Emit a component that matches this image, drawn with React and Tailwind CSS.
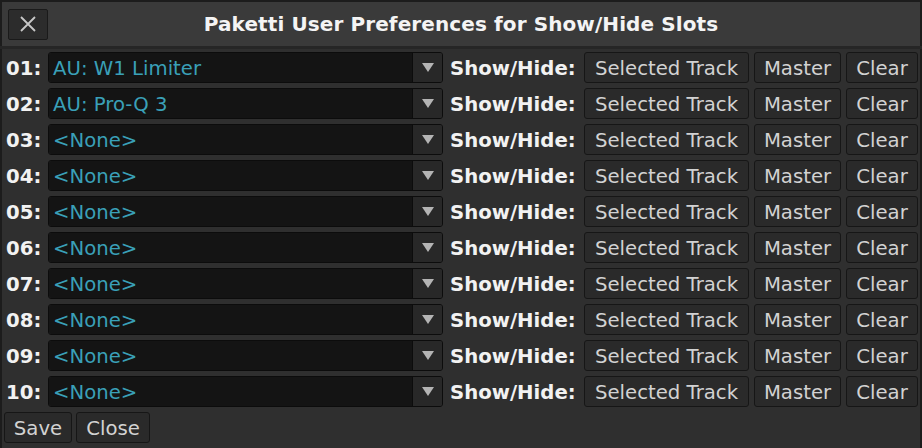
import React from "react";

const slots = [
  "AU: W1 Limiter",
  "AU: Pro-Q 3",
  "<None>",
  "<None>",
  "<None>",
  "<None>",
  "<None>",
  "<None>",
  "<None>",
  "<None>",
];

function Btn({ children, className = "" }) {
  return (
    <button
      className={`flex h-[31px] items-center justify-center rounded-[3px] border border-[#161616] bg-[#2a2a2a] pt-[2px] text-[19.7px] text-[#d2d2d2] ${className}`}
    >
      {children}
    </button>
  );
}

function SlotRow({ index, value }) {
  const num = String(index + 1).padStart(2, "0");
  return (
    <div className="flex h-[31px] items-center pl-[4px]">
      <span className="w-[42px] pt-[2px] text-[19.7px] font-bold text-[#f2f2f2]">{num}:</span>
      <div className="flex h-[31px] w-[395px] overflow-hidden rounded-[3px] border border-[#0c0c0c]">
        <div className="flex flex-1 items-center bg-[#141414] pl-[4px] pt-[2px] text-[19.7px] text-[#3aa0b8]">
          {value}
        </div>
        <div className="flex w-[30px] items-center justify-center border-l border-[#0c0c0c] bg-[#282828]">
          <svg width="12" height="9" viewBox="0 0 12 9">
            <path d="M0 0 H12 L6 9 Z" fill="#b4b4b4" />
          </svg>
        </div>
      </div>
      <span className="ml-[7px] w-[134px] pt-[2px] text-[19.7px] font-bold text-[#f2f2f2]">Show/Hide:</span>
      <Btn className="w-[165px]">Selected Track</Btn>
      <Btn className="ml-[5px] w-[87px]">Master</Btn>
      <Btn className="ml-[5px] w-[72px]">Clear</Btn>
    </div>
  );
}

export default function App() {
  return (
    <div
      className="flex h-[448px] w-[922px] flex-col overflow-hidden bg-[#1c1c1c]"
      style={{ fontFamily: '"DejaVu Sans", sans-serif' }}
    >
      <div className="mx-[2px] mt-[2px] flex h-[44px] items-center bg-[#3a3a3a] pl-[6px]">
        <button className="flex h-[31px] w-[40px] items-center justify-center rounded-[2px] border border-[#1a1a1a] bg-[#2c2c2c]">
          <svg width="16" height="16" viewBox="0 0 16 16">
            <path d="M1 1 L15 15 M15 1 L1 15" stroke="#c8c8c8" strokeWidth="1.8" />
          </svg>
        </button>
        <h1 className="flex-1 pr-[46px] text-center text-[20px] font-bold tracking-[0.1px] text-[#f4f4f4]">
          Paketti User Preferences for Show/Hide Slots
        </h1>
      </div>
      <div className="h-[3px] bg-[#262626]" />
      <div className="mx-[2px] flex flex-1 flex-col gap-[5px] bg-[#2f2f2f] pt-[3px] pr-[2px]">
        {slots.map((s, i) => (
          <SlotRow key={i} index={i} value={s} />
        ))}
        <div className="flex gap-[4px] pl-[2px]">
          <Btn className="w-[68px]">Save</Btn>
          <Btn className="w-[74px]">Close</Btn>
        </div>
      </div>
    </div>
  );
}
